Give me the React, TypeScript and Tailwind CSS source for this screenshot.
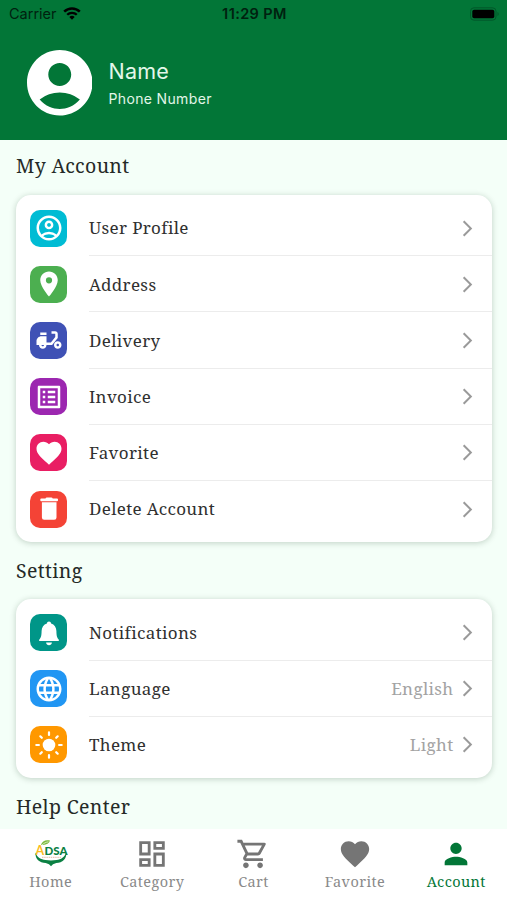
import React from 'react'
import {
  MdArrowForwardIos,
  MdDeliveryDining,
  MdFavorite,
  MdLanguage,
  MdListAlt,
  MdLocationOn,
  MdOutlineDashboard,
  MdOutlineShoppingCart,
  MdPerson,
} from 'react-icons/md'

interface MenuItem {
  label: string
  icon: React.ReactNode
  color: string
  value?: string
}

const ProfileIcon = () => (
  <svg viewBox="0 0 24 24" className="size-[30px]" fill="currentColor">
    <path d="M12 2C6.48 2 2 6.48 2 12s4.48 10 10 10 10-4.48 10-10S17.52 2 12 2zM7.35 18.5C8.66 17.56 10.26 17 12 17s3.34.56 4.65 1.5c-1.31.94-2.91 1.5-4.65 1.5s-3.34-.56-4.65-1.5zm10.79-1.38a9.947 9.947 0 0 0-12.28 0A7.957 7.957 0 0 1 4 12c0-4.42 3.58-8 8-8s8 3.58 8 8c0 1.95-.7 3.73-1.86 5.12zM12 6c-1.93 0-3.5 1.57-3.5 3.5S10.07 13 12 13s3.5-1.57 3.5-3.5S13.93 6 12 6zm0 5c-.83 0-1.5-.67-1.5-1.5S11.17 8 12 8s1.5.67 1.5 1.5S12.83 11 12 11z" />
  </svg>
)

const TrashIcon = () => (
  <svg viewBox="0 0 30 30" className="size-[30px]" fill="currentColor">
    <path d="M11.500 4.600q.2-1.200 1.400-1.200h4.400q1.200 0 1.400 1.200h4.300q1 0 1 1v.6q0 1-1 1H7.300q-1 0-1-1v-.6q0-1 1-1z" />
    <path d="M7.900 8.300h14.600v15.200q0 2.300-2.300 2.300h-10q-2.300 0-2.300-2.300z" />
  </svg>
)

const BellIcon = () => (
  <svg viewBox="0 0 30 30" className="size-[30px]" fill="currentColor">
    <path d="M15 3.400c1.200 0 2 .8 2.100 2 3.300 1 5.200 3.900 5.300 7.500.1 5 .7 6.700 2.100 8.300.8.900.5 1.900-.6 1.900H6.100c-1.100 0-1.400-1-.6-1.900 1.400-1.600 2-3.300 2.100-8.300.1-3.600 2-6.500 5.300-7.500.1-1.200.9-2 2.100-2z" />
    <path d="M12.100 24.500h5.800c-.2 1.700-1.300 2.700-2.900 2.700s-2.700-1-2.900-2.700z" />
  </svg>
)

const SunIcon = () => (
  <svg viewBox="0 0 30 30" className="size-[30px]" fill="currentColor">
    <circle cx="15" cy="15" r="6.300" />
    <path
      d="M15 2.300v2.600M15 25.100v2.600M2.300 15h2.600M25.100 15h2.600M6.300 6.300l1.500 1.500M22.200 22.200l1.500 1.500M6.300 23.700l1.500-1.500M22.200 7.800l1.500-1.500"
      stroke="currentColor"
      strokeWidth="2.200"
      strokeLinecap="round"
    />
  </svg>
)

const Avatar = () => (
  <svg viewBox="2 2 20 20" className="size-[65.500px] text-white" fill="currentColor">
    <path d="M12 2C6.48 2 2 6.48 2 12s4.48 10 10 10 10-4.48 10-10S17.52 2 12 2zm0 4c1.93 0 3.5 1.57 3.5 3.5S13.93 13 12 13s-3.500-1.57-3.500-3.500S10.070 6 12 6zm0 14c-2.03 0-4.43-.82-6.14-2.88a9.947 9.947 0 0 1 12.28 0C16.43 19.18 14.03 20 12 20z" />
  </svg>
)

const Logo = () => (
  <svg viewBox="0 0 34 34" className="size-[34px]">
    <path d="M1.500 15.500c-.5 7 4 10.100 10.200 10.500l3.300 1.200 2 2 2-2 3.300-1.200c6.200-.4 10.700-4 9.900-10.800-1.400 5.200-5.200 7.200-9.700 7.700l-5.500.5-5.500-.5C7 22.400 3 20.500 1.500 15.500z" fill="#0b8043" />
    <path d="M7 7.800C8 4 12 2.300 16 3.600c-1 3.400-4.500 4.900-9 4.200z" fill="#7cba3c" />
    <path d="M8 8c2-2 4-2.800 6.500-3.200" stroke="#e8f5d8" strokeWidth="0.8" fill="none" />
    <text x="1.500" y="18.200" fontSize="12.500" fontWeight="700" fontFamily="Lato, sans-serif" fill="#fbbc1d">A</text>
    <text x="10.500" y="18" fontSize="12" fontWeight="900" fontFamily="Lato, sans-serif" fill="#0b8043" textLength="23" lengthAdjust="spacingAndGlyphs">DSA</text>
    <path d="M8 20.300h19" stroke="#d9ab93" strokeWidth="0.800" strokeDasharray="1.500 0.700" />
  </svg>
)

const accountItems: MenuItem[] = [
  { label: 'User Profile', icon: <ProfileIcon />, color: 'bg-[#00bcd4]' },
  { label: 'Address', icon: <MdLocationOn />, color: 'bg-[#4caf50]' },
  { label: 'Delivery', icon: <MdDeliveryDining />, color: 'bg-[#3f51b5]' },
  { label: 'Invoice', icon: <MdListAlt />, color: 'bg-[#9c27b0]' },
  { label: 'Favorite', icon: <MdFavorite />, color: 'bg-[#e91e63]' },
  { label: 'Delete Account', icon: <TrashIcon />, color: 'bg-[#f44336]' },
]

const settingItems: MenuItem[] = [
  { label: 'Notifications', icon: <BellIcon />, color: 'bg-[#009688]' },
  { label: 'Language', icon: <MdLanguage />, color: 'bg-[#2196f3]', value: 'English' },
  { label: 'Theme', icon: <SunIcon />, color: 'bg-[#ff9800]', value: 'Light' },
]

const tabs = [
  { label: 'Home', icon: <Logo /> },
  { label: 'Category', icon: <MdOutlineDashboard /> },
  { label: 'Cart', icon: <MdOutlineShoppingCart /> },
  { label: 'Favorite', icon: <MdFavorite /> },
  { label: 'Account', icon: <MdPerson />, active: true },
]

const StatusBar = () => (
  <div className="grid h-7 grid-cols-3 items-center pl-[9px] pr-[7px] text-[#00210f]">
    <div className="flex items-center gap-[6px]">
      <span className="text-[14.500px]">Carrier</span>
      <svg viewBox="0 0 18 13" className="mb-[2px] h-[13px] w-[18px] text-black" fill="none" stroke="currentColor">
        <path d="M1.200 4.700a11 11 0 0 1 15.600 0" strokeWidth="2.500" />
        <path d="M4.200 7.800a6.800 6.800 0 0 1 9.600 0" strokeWidth="2.300" />
        <path d="M9 12.800L6.300 10a3.900 3.900 0 0 1 5.400 0z" fill="currentColor" stroke="none" />
      </svg>
    </div>
    <span className="text-center text-[14.500px] font-semibold tracking-[0.4px]">11:29 PM</span>
    <svg viewBox="0 0 30 14" className="mb-[1px] h-[14px] w-[30px] justify-self-end">
      <rect x="0.500" y="0.800" width="25.500" height="12.400" rx="3.500" fill="none" stroke="#02572a" />
      <rect x="2.300" y="2.700" width="22" height="8.600" rx="1.800" fill="#000" />
      <path d="M27.500 5a2.300 2.300 0 0 1 0 4z" fill="#02572a" />
    </svg>
  </div>
)

const MenuCard = ({ items }: { items: MenuItem[] }) => (
  <div className="mx-[15.500px] rounded-[15px] bg-white py-[5px] shadow-[0_1px_6px_rgba(0,40,20,0.22)]">
    {items.map((item, i) => (
      <div key={item.label} className="flex h-[56.200px] items-center pl-[14.500px]">
        <div className={`flex size-[37px] shrink-0 items-center justify-center rounded-[10px] text-[30px] text-white ${item.color}`}>
          {item.icon}
        </div>
        <div
          className={`ml-[21.500px] flex h-full flex-1 items-center pr-[15px] ${
            i < items.length - 1 ? 'border-b border-[#ececec] pt-[1px]' : ''
          }`}
        >
          <span className="flex-1 pl-[0.500px] text-[17px] tracking-[0.35px] text-[#303030]">{item.label}</span>
          {item.value && <span className="mr-[4px] text-[17px] tracking-[0.35px] text-[#a3a3a3]">{item.value}</span>}
          <MdArrowForwardIos className="text-[19px] text-[#9a9a9a]" />
        </div>
      </div>
    ))}
  </div>
)

const SectionTitle = ({ children }: { children: React.ReactNode }) => (
  <h2 className="flex h-[57.300px] items-center pb-[1px] pl-4 text-[19.500px] tracking-[0.35px] text-[#252a27]">{children}</h2>
)

export default function App() {
  return (
    <div className="flex h-[900px] w-[507px] flex-col overflow-hidden bg-[#f4fff8] font-['Noto_Serif','DejaVu_Serif_Condensed','DejaVu_Serif',serif]">
      <header className="h-[140px] shrink-0 bg-[#027637] font-[Inter,sans-serif]">
        <StatusBar />
        <div className="flex items-center pl-[26.500px] pt-[22px]">
          <Avatar />
          <div className="ml-[16.500px] flex flex-col text-[#e3f7e9]">
            <span className="text-[21.500px] leading-7 tracking-[0.2px]">Name</span>
            <span className="mt-1 text-[14px] leading-5 tracking-[0.35px]">Phone Number</span>
          </div>
        </div>
      </header>

      <main className="flex-1 overflow-hidden">
        <div className="-mt-[2.300px]">
          <SectionTitle>My Account</SectionTitle>
        </div>
        <MenuCard items={accountItems} />
        <SectionTitle>Setting</SectionTitle>
        <MenuCard items={settingItems} />
        <SectionTitle>Help Center</SectionTitle>
      </main>

      <nav className="grid h-[71px] shrink-0 grid-cols-5 bg-white">
        {tabs.map(tab => (
          <div
            key={tab.label}
            className={`flex flex-col items-center pt-[8px] text-[34px] ${tab.active ? 'text-[#027637]' : 'text-[#757575]'}`}
          >
            {tab.icon}
            <span className={`text-[14.500px] leading-5 tracking-[0.4px] ${tab.active ? '' : 'text-[#8a8a8a]'}`}>
              {tab.label}
            </span>
          </div>
        ))}
      </nav>
    </div>
  )
}
